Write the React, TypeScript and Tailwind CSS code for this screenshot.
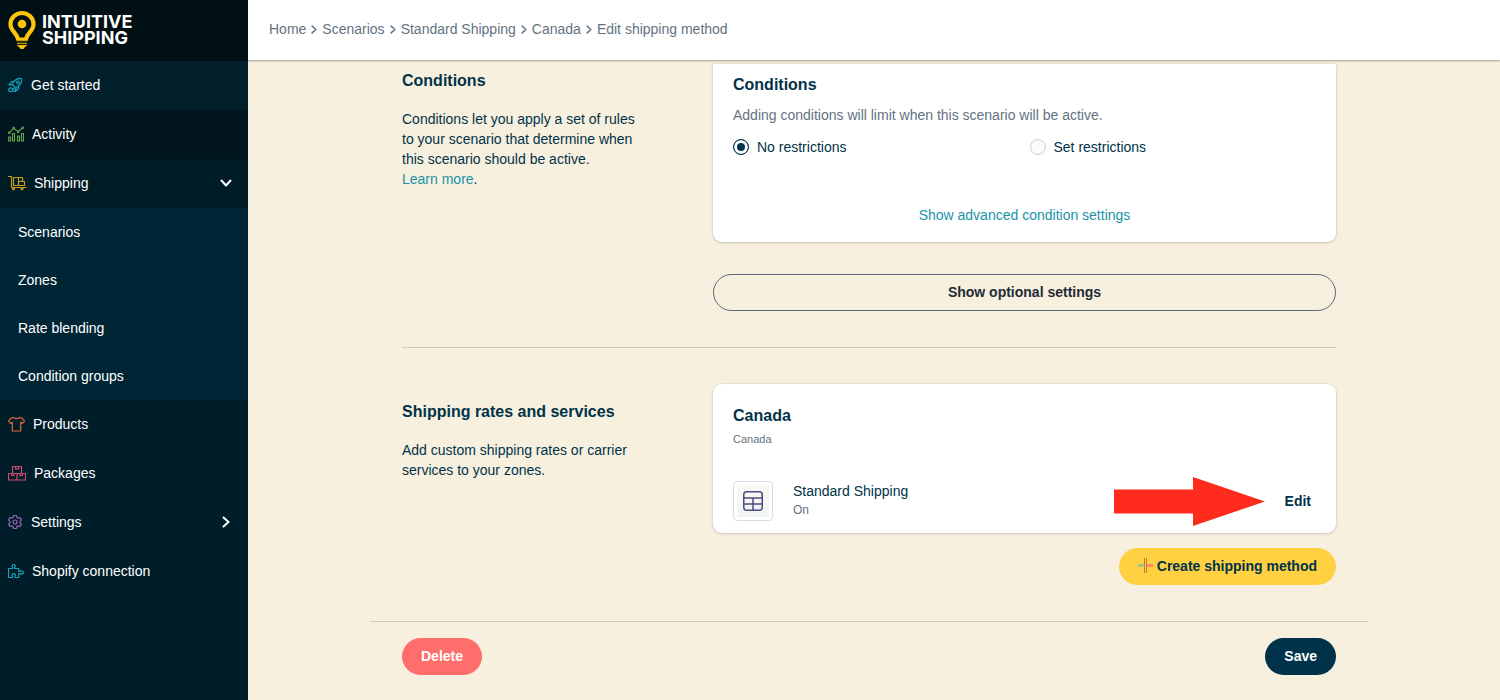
import type { ReactNode } from 'react';
import { useState } from 'react';

const stroke = {
  fill: 'none',
  stroke: 'currentColor',
  strokeWidth: 1.2,
  strokeLinecap: 'round' as const,
  strokeLinejoin: 'round' as const,
  'aria-hidden': true,
};

function RocketIcon() {
  return (
    <svg className="h-4 w-[15px] text-[#18a0ba]" viewBox="0 0 15 16" {...stroke}>
      <path d="M13.500 1.500c-3.600-.3-5.700.7-7.300 2.800L4.300 7.500l3.400 3.400 3-2c2.200-1.600 3.100-3.700 2.800-7.400z" />
      <circle cx="9.900" cy="5.300" r="1.300" />
      <path d="M6 4.500H3.600L1 7.900h3.200M10.700 9.200v2.300L7.300 14.400v-3.300" />
      <circle cx="2.600" cy="12.700" r="1.900" />
      <circle cx="6.600" cy="12.700" r="1.700" />
    </svg>
  );
}

function ActivityIcon() {
  return (
    <svg className="h-4 w-4 text-[#63a04c]" viewBox="0 0 16 16" {...stroke}>
      <path d="M.5 11h2v4h-2zM4.500 7.500h2V15h-2zM9.500 10h2v5h-2zM13.500 7.500h2V15h-2z" />
      <path d="M1.700 6.300 5.200 2.800M6.300 2.800l3.300 2.600M10.700 5l3.600-2.700" />
      <circle cx="1.200" cy="6.800" r=".7" />
      <circle cx="5.700" cy="2" r=".7" />
      <circle cx="10.200" cy="5.700" r=".7" />
      <circle cx="14.900" cy="1.800" r=".7" />
    </svg>
  );
}

function TrolleyIcon() {
  return (
    <svg className="h-4 w-[18px] text-[#c99a1c]" viewBox="0 0 18 16" {...stroke}>
      <path d="M.5 1.500h3v11h14M5.500 10.500v-8h9v4M5.500 10.500h11v-4h-6v4M10.500 6.500v-4" />
      <circle cx="5.500" cy="13.700" r="1" />
      <circle cx="14" cy="13.700" r="1" />
    </svg>
  );
}

function ShirtIcon() {
  return (
    <svg className="h-4 w-[17px] text-[#e0683f]" viewBox="0 0 17 16" {...stroke}>
      <path d="M5.500 1.500c.8 1.500 5.200 1.500 6 0l2.500.6 2.500 3-2 2.300-1.800-1.200v8.800H4.300V6.200L2.500 7.400.5 5.100l2.500-3z" />
    </svg>
  );
}

function PackagesIcon() {
  return (
    <svg className="h-4 w-[18px] text-[#c84d70]" viewBox="0 0 18 16" {...stroke}>
      <path d="M.5 8.500h17v6.500H.5zM9 8.500V15M4.500 8.500v-7h9v7M7.500 1.500v2.300h3V1.500M3.500 8.500v2h2.500v-2M12 8.500v2h2.500v-2" />
    </svg>
  );
}

function GearIcon() {
  return (
    <svg className="h-4 w-[15px] text-[#9a5fb8]" viewBox="0 0 15 16" {...stroke}>
      <path d="M5.500 1.500h3l.5 2 1.200.6 1.900-.6 1.300 2.400L12 7.300v1.400l1.400 1.400-1.300 2.400-1.900-.6-1.200.6-.5 2h-3l-.5-2-1.200-.6-1.900.6L.6 10.100 2 8.700V7.300L.6 5.900l1.300-2.400 1.900.6L5 3.500z" />
      <circle cx="7" cy="8" r="2" />
    </svg>
  );
}

function PuzzleIcon() {
  return (
    <svg className="h-4 w-4 text-[#18a0ba]" viewBox="0 0 16 16" {...stroke}>
      <path d="M.5 5.500h4.200V4.300C3.600 3.400 4 1.500 5.700 1.500s2.100 1.900 1 2.800v1.200h4.100v3h1.300c.9-1 3.400-.7 3.400 1s-2.500 2-3.400 1h-1.300v4H7v-1.300c1-1 .3-2.500-1.200-2.500s-2.300 1.500-1.300 2.500v1.300h-4z" />
    </svg>
  );
}

function Chevron({ className }: { className: string }) {
  return (
    <svg
      className={className}
      viewBox="0 0 8 12"
      fill="none"
      stroke="currentColor"
      strokeWidth="2"
      strokeLinecap="round"
      strokeLinejoin="round"
      aria-hidden="true"
    >
      <path d="M1.500 1.500 6.500 6l-5 4.500" />
    </svg>
  );
}

function Logo() {
  return (
    <a href="#home" className="flex h-[61px] items-center gap-1.5 bg-[#001014] pb-0.5 pl-2 text-white">
      <svg className="h-10 w-7" viewBox="0 0 28 40" fill="none" aria-hidden="true">
        <path
          d="M14 3C7.600 3 2.500 8 2.500 14.200c0 6.800 6.500 8.800 7.700 15.300h7.600c1.200-6.500 7.700-8.500 7.700-15.300C25.500 8 20.400 3 14 3z"
          stroke="#ffc40c"
          strokeWidth="4.200"
        />
        <circle cx="14" cy="14" r="4.300" fill="#ffc40c" />
        <path d="M9 29h10v3.200H9z" fill="#ffc40c" />
        <path d="M9 33.200h10v2.200L17 37l-1.500 2h-3L11 37l-2-1.500z" fill="#ffc40c" />
        <path d="M8 31.300h12M8 34.600h12" stroke="#001014" strokeWidth="1" />
      </svg>
      <span className="font-['Inter',sans-serif] text-lg leading-4 font-bold">
        <span className="block">INTUITIVE</span>
        <span className="block">SHIPPING</span>
      </span>
    </a>
  );
}

function NavRow({
  icon,
  label,
  tone = 'bg-[#001e2a]',
  arrow,
}: {
  icon: ReactNode;
  label: string;
  tone?: string;
  arrow?: 'down' | 'right';
}) {
  return (
    <li>
      <a href="#section" className={`flex h-[49px] items-center pr-[18px] pb-0.5 pl-2 ${tone}`}>
        {icon}
        <span className="ml-2 flex-1">{label}</span>
        {arrow === 'down' && <Chevron className="h-3 w-2 rotate-90" />}
        {arrow === 'right' && <Chevron className="h-3 w-2" />}
      </a>
    </li>
  );
}

function Sidebar() {
  return (
    <nav className="w-[248px] shrink-0 bg-[#001e2a] text-sm text-white">
      <Logo />
      <ul>
        <NavRow icon={<RocketIcon />} label="Get started" tone="bg-[#001f2b]" />
        <NavRow icon={<ActivityIcon />} label="Activity" tone="bg-[#00151d]" />
        <NavRow icon={<TrolleyIcon />} label="Shipping" tone="bg-[#001c27]" arrow="down" />
        <li className="bg-[#002635]">
          <ul>
            {['Scenarios', 'Zones', 'Rate blending', 'Condition groups'].map((label) => (
              <li key={label}>
                <a href="#scenario" className="flex h-12 items-center pl-[18px]">
                  {label}
                </a>
              </li>
            ))}
          </ul>
        </li>
        <NavRow icon={<ShirtIcon />} label="Products" />
        <NavRow icon={<PackagesIcon />} label="Packages" />
        <NavRow icon={<GearIcon />} label="Settings" arrow="right" />
        <NavRow icon={<PuzzleIcon />} label="Shopify connection" />
      </ul>
    </nav>
  );
}

function Breadcrumbs() {
  const crumbs = ['Home', 'Scenarios', 'Standard Shipping', 'Canada', 'Edit shipping method'];
  return (
    <header className="relative flex h-[60px] items-center bg-white px-[21px] pb-0.5 text-sm text-[#637381] shadow-[0_1px_2px_rgba(30,40,60,0.4)]">
      <ol className="flex items-center">
        {crumbs.map((crumb, i) => (
          <li key={crumb} className="flex items-center">
            {i > 0 && <Chevron className="mx-[5px] h-[9px] w-1.5" />}
            <a href="#crumb">{crumb}</a>
          </li>
        ))}
      </ol>
    </header>
  );
}

const cardShadow = 'shadow-[0_0_0_1px_rgba(63,63,68,0.05),0_1px_3px_rgba(63,63,68,0.2)]';

function ConditionsSection() {
  const [mode, setMode] = useState('none');
  const options = [
    { id: 'none', label: 'No restrictions' },
    { id: 'set', label: 'Set restrictions' },
  ];
  return (
    <section className="grid grid-cols-[291px_1fr] gap-5 border-b border-[#cdc9c0] pb-9">
      <div className="pt-[5px]">
        <h2 className="text-base leading-6 font-bold">Conditions</h2>
        <p className="mt-4 max-w-60 text-sm leading-5">
          Conditions let you apply a set of rules to your scenario that determine when this scenario
          should be active.
          <br />
          <a href="#learn" className="text-[#1a93a8]">
            Learn more
          </a>
          .
        </p>
      </div>
      <div>
        <div className={`rounded-b-[9px] bg-white px-5 pt-[9px] pb-[15px] ${cardShadow}`}>
          <h2 className="text-base leading-6 font-bold">Conditions</h2>
          <p className="mt-1.5 text-sm leading-6 text-[#637381]">
            Adding conditions will limit when this scenario will be active.
          </p>
          <div className="mt-2 grid grid-cols-2 gap-2.5">
            {options.map(({ id, label }) => (
              <label key={id} className="flex items-center gap-2 text-sm leading-6">
                <input
                  type="radio"
                  name="restriction"
                  checked={mode === id}
                  onChange={() => setMode(id)}
                  className="size-4 appearance-none rounded-full border border-[#c9cfd6] bg-[#fafbfb] checked:border-[#003349] checked:bg-[#003349] checked:shadow-[inset_0_0_0_3px_white]"
                />
                {label}
              </label>
            ))}
          </div>
          <div className="mt-11 text-center">
            <button type="button" className="text-sm leading-6 text-[#1a93a8]">
              Show advanced condition settings
            </button>
          </div>
        </div>
        <button
          type="button"
          className="mt-8 h-[37px] w-full rounded-full border border-[#5b6678] pb-0.5 text-sm font-bold text-[#212b36]"
        >
          Show optional settings
        </button>
      </div>
    </section>
  );
}

function RatesSection() {
  return (
    <section className="grid grid-cols-[291px_1fr] gap-5 pt-9 pb-9">
      <div className="pt-4">
        <h2 className="text-base leading-6 font-bold">Shipping rates and services</h2>
        <p className="mt-4 max-w-60 text-sm leading-5">
          Add custom shipping rates or carrier services to your zones.
        </p>
      </div>
      <div>
        <div className={`rounded-[9px] bg-white px-5 pt-5 pb-3 ${cardShadow}`}>
          <h2 className="text-base leading-6 font-bold">Canada</h2>
          <p className="mt-[3px] text-[11px] leading-4 text-[#637381]">Canada</p>
          <div className="mt-[34px] flex h-10 items-center">
            <span className="flex size-10 rounded border border-[#d3dde6] bg-white p-[3px]">
              <span className="flex size-full items-center justify-center bg-linear-to-b from-[#f9f8f5] to-[#f1f5f6]">
                <svg
                  className="size-5"
                  viewBox="0 0 20 20"
                  fill="none"
                  stroke="#4d4a80"
                  strokeWidth="1.500"
                  aria-hidden="true"
                >
                  <rect x=".75" y=".75" width="18.500" height="18.500" rx="3" />
                  <path d="M1 7h18M1 13h18M10 7v12" />
                </svg>
              </span>
            </span>
            <div className="ml-5 pb-0.5">
              <p className="text-sm leading-5">Standard Shipping</p>
              <p className="text-xs leading-[18px] text-[#637381]">On</p>
            </div>
            <svg className="ml-auto h-[49px] w-[151px]" viewBox="0 0 151 49" aria-hidden="true">
              <path d="M0 12.500h79V0l72 24.500L79 49V36.500H0z" fill="#ff2b1d" />
            </svg>
            <button type="button" className="mr-[5px] ml-5 text-sm font-bold">
              Edit
            </button>
          </div>
        </div>
        <div className="mt-[15px] flex justify-end">
          <button
            type="button"
            className="flex h-[37px] items-center gap-1 rounded-full bg-[#ffd042] px-[19px] pb-0.5 text-sm font-bold"
          >
            <svg className="size-[15px]" viewBox="0 0 15 15" fill="none" aria-hidden="true">
              <path d="M0 7.500h6" stroke="#6fc3a0" strokeWidth="2.400" />
              <path d="M9 7.500h6" stroke="#e8668f" strokeWidth="2.400" />
              <path d="M0 7.500h15" stroke="#f0c050" strokeWidth=".6" />
              <path d="M6.500 0v15M8.500 0v15" stroke="#c07c28" />
            </svg>
            Create shipping method
          </button>
        </div>
      </div>
    </section>
  );
}

export default function App() {
  return (
    <div className="flex min-h-screen bg-[#f8f0df] font-['Liberation_Sans',Arial,sans-serif] text-[#003349]">
      <Sidebar />
      <div className="min-w-0 flex-1">
        <Breadcrumbs />
        <main className="pt-1 pr-2.5">
          <div className="mx-auto max-w-[998px]">
            <div className="px-8">
              <ConditionsSection />
              <RatesSection />
            </div>
            <footer className="flex justify-between border-t border-[#cdc9c0] px-8 pt-4 pb-5">
              <button
                type="button"
                className="h-[37px] rounded-full bg-[#ff6e6b] px-[19px] pb-0.5 text-sm font-bold text-white"
              >
                Delete
              </button>
              <button
                type="button"
                className="h-[37px] rounded-full bg-[#003349] px-[19px] pb-0.5 text-sm font-bold text-white"
              >
                Save
              </button>
            </footer>
          </div>
        </main>
      </div>
    </div>
  );
}
